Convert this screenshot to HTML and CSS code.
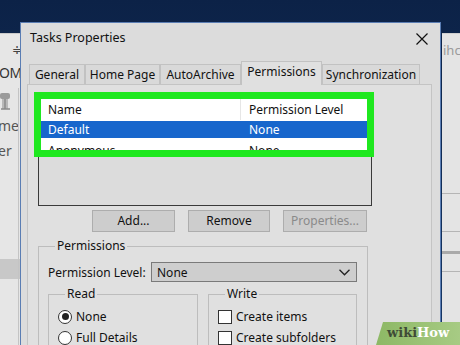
FILE: index.html
```html
<!DOCTYPE html>
<html lang="en">
<head>
    <meta charset="UTF-8">
    <title>Tasks Properties</title>
    <link rel="stylesheet" href="styles.css">
</head>
<body>

    <div class="desk-left">
        <span class="pin">&#8785;</span>
        <div class="ribbon-text">OM</div>
        <div class="ribbon-icon">
            <svg width="12" height="22" viewBox="0 0 12 22"><rect x="0" y="2" width="10" height="6" rx="2" fill="#9a9a9a"/><rect x="2" y="8" width="6" height="10" fill="#b8b8b8"/><path d="M1 18h9M5 8v10" stroke="#8a8a8a" stroke-width="1.5"/></svg>
        </div>
        <div class="ribbon-label">me</div>
        <div class="ribbon-label">er</div>
        <div class="left-band"></div>
    </div>

    <div class="desk-right">
        <div class="right-text">ihc</div>
        <div class="right-line l1"></div>
        <div class="right-line l2"></div>
        <div class="right-line l3"></div>
        <div class="right-line l4"></div>
    </div>

    <div class="dialog">
        <div class="titlebar">
            <span class="title">Tasks Properties</span>
            <svg class="close" width="12" height="12" viewBox="0 0 12 12"><path d="M0.5 0.5l11 11M11.5 0.5l-11 11" stroke="#111" stroke-width="1.2"/></svg>
        </div>

        <div class="tabs">
            <div class="tab w-general">General</div>
            <div class="tab w-home">Home Page</div>
            <div class="tab w-auto">AutoArchive</div>
            <div class="tab active w-perm">Permissions</div>
            <div class="tab w-sync">Synchronization</div>
        </div>

        <div class="panel">
            <div class="listbox">
                <div class="highlight">
                    <div class="row head"><span class="col-name">Name</span><span class="col-level">Permission Level</span></div>
                    <div class="row selected"><span class="col-name">Default</span><span class="col-level">None</span></div>
                    <div class="row last"><span class="col-name">Anonymous</span><span class="col-level">None</span></div>
                </div>
            </div>

            <div class="buttons">
                <div class="btn w-add">Add...</div>
                <div class="btn w-remove">Remove</div>
                <div class="btn disabled w-props">Properties...</div>
            </div>

            <fieldset class="group outer">
                <legend>Permissions</legend>
                <div class="level-row">
                    <span class="level-label">Permission Level:</span>
                    <div class="select">
                        <span>None</span>
                        <svg width="11" height="7" viewBox="0 0 11 7"><path d="M0.5 0.8l5 5 5-5" fill="none" stroke="#222" stroke-width="1.3"/></svg>
                    </div>
                </div>
                <div class="subgroups">
                    <fieldset class="group sub read">
                        <legend>Read</legend>
                        <div class="option"><span class="radio checked"></span>None</div>
                        <div class="option"><span class="radio"></span>Full Details</div>
                    </fieldset>
                    <fieldset class="group sub write">
                        <legend>Write</legend>
                        <div class="option"><span class="check"></span>Create items</div>
                        <div class="option"><span class="check"></span>Create subfolders</div>
                    </fieldset>
                </div>
            </fieldset>
        </div>
    </div>

    <div class="watermark"><span class="wiki">wiki</span><span class="how">How</span></div>

</body>
</html>
```

FILE: styles.css
```css
body { margin: 0; width: 460px; height: 345px; overflow: hidden; position: relative; font-family: "Noto Sans", Arial, sans-serif; font-size: 12px; color: #111; background: linear-gradient(180deg, #0c2247 0%, #163766 100%); }

/* windows behind the dialog */
.desk-left { position: absolute; left: 0; top: 33px; width: 20px; height: 312px; background: #e6e6e6; border-top: 1px solid #c9c9c9; overflow: hidden; }
.pin { display: block; margin: 10px 0 0 12px; font-size: 12px; line-height: 12px; color: #444; }
.ribbon-text { margin: 8px 0 0 -1px; font-size: 14px; line-height: 18px; color: #333; letter-spacing: -0.5px; }
.ribbon-icon { margin: 9px 0 0 0; height: 22px; }
.ribbon-label { margin-left: -2px; font-size: 14px; line-height: 25px; color: #555; }
.left-band { margin-top: 96px; height: 20px; background: #c8c8c8; }
.desk-left::after { content: ""; position: absolute; left: 18px; top: 54px; bottom: 0; width: 1px; background: #c4c4c4; }

.desk-right { position: absolute; left: 442px; top: 33px; width: 18px; height: 312px; background: #e4e4e4; border-top: 1px solid #cfcfcf; }
.right-text { margin: 8px 0 0 1px; font-size: 13px; color: #9a9a9a; line-height: 16px; }
.right-line { height: 1px; background: #b5b5b5; }
.l1 { margin-top: 135px; }
.l2 { margin-top: 37px; }
.l3 { margin-top: 19px; height: 3px; background: #a9a9a9; }
.l4 { margin-top: 17px; }

/* dialog */
.dialog { position: absolute; left: 20px; top: 22px; width: 419px; height: 323px; background: #dcdcdc; border: 1px solid #5a7db3; border-bottom: none; overflow: hidden; }
.titlebar { height: 38px; box-sizing: border-box; padding: 4px 9px 0 9px; display: flex; justify-content: space-between; align-items: flex-start; }
.title { font-size: 12.5px; line-height: 22px; color: #111; }
.close { margin: 6px 3px 0 0; }

.tabs { display: flex; align-items: flex-end; height: 23px; margin-left: 8px; position: relative; z-index: 1; }
.tab { height: 20px; box-sizing: border-box; border: 1px solid #c2c2c2; border-bottom: none; background: #d9d9d9; line-height: 19px; text-align: center; font-size: 12px; white-space: nowrap; }
.tab.active { height: 24px; margin-bottom: -1px; background: #e0e0e0; line-height: 20px; }
.w-general { width: 56px; }
.w-home { width: 75px; }
.w-auto { width: 81px; }
.w-perm { width: 81px; }
.w-sync { width: 98px; }

.panel { margin-left: 6px; width: 405px; height: 280px; box-sizing: border-box; border: 1px solid #c4c4c4; border-bottom: none; background: #e0e0e0; padding: 11px 0 0 10px; }

.listbox { position: relative; width: 334px; height: 110px; box-sizing: border-box; border: 1px solid #3a3a3a; background: #dcdcdc; }
.highlight { position: absolute; left: -5px; top: -5px; width: 340px; height: 65px; box-sizing: border-box; border: 7px solid #1fe81f; background: #fff; overflow: hidden; }
.row { display: flex; height: 17px; line-height: 17px; font-size: 12px; margin-top: 1px; }
.row.head { height: 21px; line-height: 21px; margin-top: 0; }
.row.selected { background: #1766cc; color: #fff; }
.row.last { margin-top: 4px; }
.col-name { width: 192px; padding-left: 7px; border-right: 1px solid transparent; }
.head .col-name { border-right-color: #e6e6e6; }
.col-level { padding-left: 8px; }

.buttons { display: flex; gap: 13px; margin: 4px 0 0 54px; }
.btn { height: 22px; box-sizing: border-box; border: 1px solid #adadad; background: #cdcdcd; text-align: center; line-height: 20px; font-size: 12px; }
.btn.disabled { color: #8a8a8a; }
.w-add { width: 83px; }
.w-remove { width: 82px; }
.w-props { width: 84px; }

.group { margin: 0; border: 1px solid #bdbdbd; padding: 0; }
.group legend { padding: 0 2px; font-size: 12px; line-height: 16px; }
.outer { width: 330px; box-sizing: border-box; margin-top: 6px; padding: 0 0 0 9px; height: 120px; }
.outer legend { margin-left: 7px; }
.level-row { display: flex; align-items: center; margin-top: 8px; }
.level-label { width: 103px; font-size: 12px; }
.select { width: 206px; height: 20px; box-sizing: border-box; border: 1px solid #7a7a7a; background: #cecece; display: flex; justify-content: space-between; align-items: center; padding: 0 6px 0 5px; }

.subgroups { display: flex; gap: 10px; margin-top: 4px; }
.sub { width: 150px; box-sizing: border-box; height: 70px; padding: 4px 0 0 9px; }
.sub.write { width: 149px; }
.sub legend { margin-left: 7px; }
.option { display: flex; align-items: center; gap: 4px; height: 21px; font-size: 12px; }
.radio { width: 14px; height: 14px; box-sizing: border-box; border: 1px solid #333; border-radius: 50%; background: #fff; display: flex; align-items: center; justify-content: center; }
.radio.checked::after { content: ""; width: 7px; height: 7px; border-radius: 50%; background: #222; }
.check { width: 14px; height: 14px; box-sizing: border-box; border: 1px solid #333; background: #fff; }

/* watermark */
.watermark { position: absolute; left: 376px; top: 322px; width: 84px; height: 23px; background: linear-gradient(90deg, #8db865, #a7cb84); clip-path: polygon(7px 0, 100% 0, 100% 100%, 0 100%); padding-left: 11px; box-sizing: border-box; font-family: "DejaVu Serif", "Liberation Serif", serif; font-weight: bold; font-size: 13px; line-height: 22px; }
.wiki { color: #3f4b36; }
.how { color: #fff; }
```
